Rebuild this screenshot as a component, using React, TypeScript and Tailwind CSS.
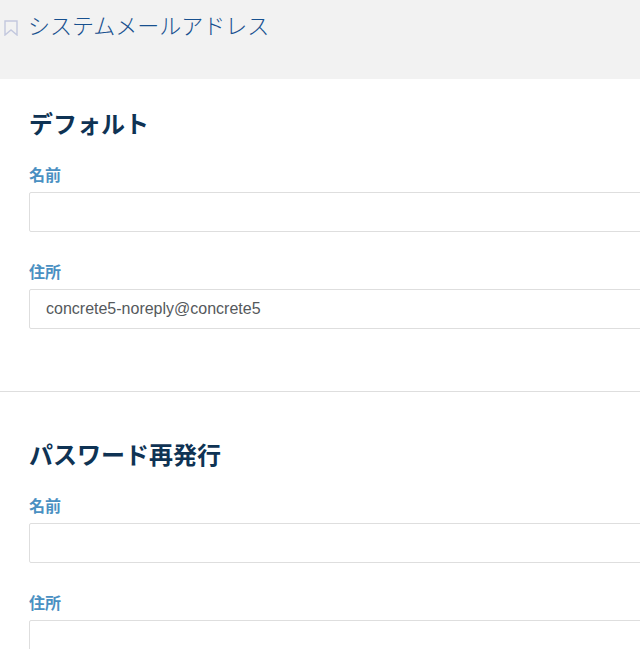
function Field({ label, value }: { label: string; value?: string }) {
  return (
    <div className="flex flex-col">
      <label className="pt-[1px] text-[16px] leading-[20px] font-bold text-[#4a90c2]">{label}</label>
      <div className="-mr-[20px] mt-[6px] flex h-[40px] items-center rounded-[2px] border border-[#dedede] bg-white pl-[16px] text-[16px] text-[#55595c]">
        {value}
      </div>
    </div>
  );
}

export default function App() {
  return (
    <div className="h-[649px] w-[640px] overflow-hidden bg-white font-['Liberation_Sans','Noto_Sans_CJK_JP',sans-serif]">
      <header className="flex h-[79px] items-start gap-[10px] bg-[#f2f2f2] pl-[4px] pt-[13px]">
        <svg width="14" height="16" viewBox="0 0 14 16" className="mt-[7px]" fill="none" stroke="#c3c8de" strokeWidth="1.4">
          <path d="M1 1h12v14L7 10l-6 5z" />
        </svg>
        <h1 className="text-[22px] leading-[28px] font-light text-[#17508f]">システムメールアドレス</h1>
      </header>
      <section className="flex h-[313px] flex-col gap-[23px] overflow-hidden border-b border-[#dedede] pl-[29px] pt-[29px]">
        <h2 className="text-[24px] leading-[34px] font-bold text-[#0f3354]">デフォルト</h2>
        <div className="flex flex-col gap-[30px]">
          <Field label="名前" />
          <Field label="住所" value="concrete5-noreply@concrete5" />
        </div>
      </section>
      <section className="flex flex-col gap-[23px] overflow-hidden pl-[29px] pt-[47px]">
        <h2 className="text-[24px] leading-[34px] font-bold text-[#0f3354]">パスワード再発行</h2>
        <div className="flex flex-col gap-[30px]">
          <Field label="名前" />
          <Field label="住所" />
        </div>
      </section>
    </div>
  );
}
